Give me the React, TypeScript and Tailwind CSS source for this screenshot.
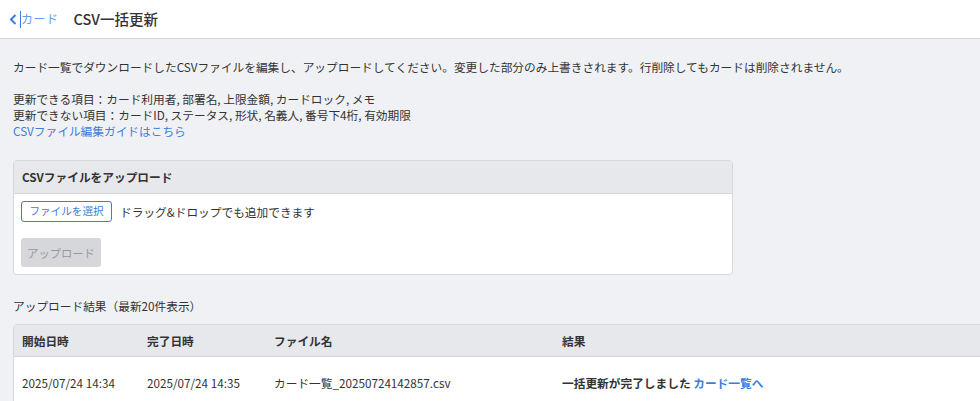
import React from 'react'

const font = { fontFamily: '"Noto Sans CJK JP", "Noto Sans", sans-serif' }

function Header() {
  return (
    <div className="h-[39px] bg-white border-b border-[#d6d8dd] flex items-center pl-[9px]">
      <a className="flex items-center text-[#3b7ddd] text-[12px]">
        <svg width="8" height="11" viewBox="0 0 8 11" className="mr-[3px]">
          <path d="M6.5 1 L2 5.5 L6.5 10" fill="none" stroke="#3b7ddd" strokeWidth="2" />
        </svg>
        <span className="w-px h-[17px] bg-[#3b7ddd]" />
        <span className="text-[#6a9be4] tracking-[0.5px]">カード</span>
      </a>
      <h1 className="ml-[15px] text-[14.5px] text-[#333] font-medium">CSV一括更新</h1>
    </div>
  )
}

function UploadCard() {
  return (
    <div className="w-[720px] border border-[#d6d8dd] rounded-[4px] bg-white overflow-hidden">
      <div className="h-[33px] bg-[#e6e8eb] border-b border-[#d6d8dd] flex items-center px-[8px] font-bold">
        CSVファイルをアップロード
      </div>
      <div className="px-[7px] pt-[7px] pb-[7px]">
        <div className="flex items-center gap-[8px]">
          <button className="h-[21px] w-[91px] border border-[#3b7ddd] rounded-[3px] text-[10.6px] text-[#3b7ddd] bg-white leading-none">
            ファイルを選択
          </button>
          <span>ドラッグ&ドロップでも追加できます</span>
        </div>
        <button className="mt-[16px] h-[29px] w-[80px] rounded-[3px] bg-[#d5d7da] text-[11.3px] text-[#999]">
          アップロード
        </button>
      </div>
    </div>
  )
}

function ResultTable() {
  return (
    <div className="w-[1000px] border border-[#d6d8dd] rounded-tl-[4px] bg-white overflow-hidden">
      <div className="h-[32px] bg-[#e6e8eb] border-b border-[#d6d8dd] flex items-center font-bold">
        <div className="w-[133px] pl-[8px]">開始日時</div>
        <div className="w-[127px]">完了日時</div>
        <div className="w-[288px]">ファイル名</div>
        <div className="flex-1">結果</div>
      </div>
      <div className="h-[52px] flex items-center">
        <div className="w-[133px] pl-[8px]">2025/07/24 14:34</div>
        <div className="w-[127px]">2025/07/24 14:35</div>
        <div className="w-[288px]">カード一覧_20250724142857.csv</div>
        <div className="flex-1 font-bold">
          一括更新が完了しました <a className="text-[#3b7ddd]">カード一覧へ</a>
        </div>
      </div>
    </div>
  )
}

export default function App() {
  return (
    <div className="w-[980px] h-[401px] overflow-hidden bg-[#f0f1f5]" style={font}>
      <Header />
      <div className="pl-[13px] pt-[20px] text-[11.7px] text-[#333] leading-[16px]">
        <p>カード一覧でダウンロードしたCSVファイルを編集し、アップロードしてください。変更した部分のみ上書きされます。行削除してもカードは削除されません。</p>
        <div className="mt-[16px]">
          <p>更新できる項目：カード利用者, 部署名, 上限金額, カードロック, メモ</p>
          <p>更新できない項目：カードID, ステータス, 形状, 名義人, 番号下4桁, 有効期限</p>
          <a className="text-[#3b7ddd]">CSVファイル編集ガイドはこちら</a>
        </div>
        <div className="mt-[21px]">
          <UploadCard />
        </div>
        <p className="mt-[23px]">アップロード結果（最新20件表示）</p>
        <div className="mt-[10px]">
          <ResultTable />
        </div>
      </div>
    </div>
  )
}
